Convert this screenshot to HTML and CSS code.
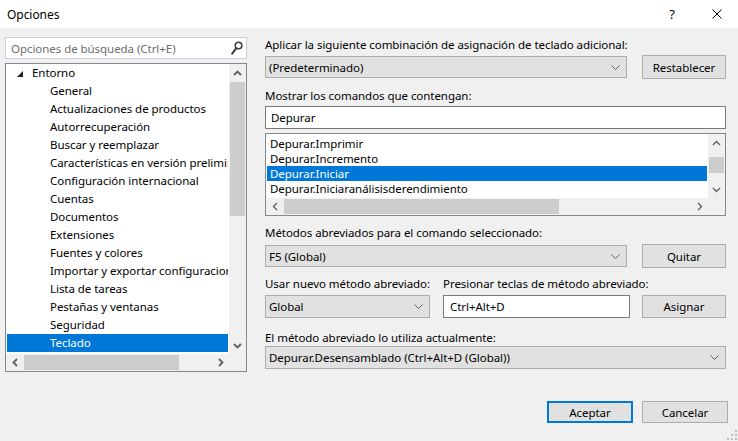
FILE: index.html
```html
<!DOCTYPE html>
<html lang="es">
<head>
<meta charset="utf-8">
<title>Opciones</title>
<link rel="stylesheet" href="styles.css">
</head>
<body>
<div class="titlebar">
  <span class="title">Opciones</span>
  <span class="tb-help">?</span>
  <span class="tb-close"><svg width="10" height="10" viewBox="0 0 10 10"><path d="M0.5 0.5L9.5 9.5M9.5 0.5L0.5 9.5" stroke="#000" stroke-width="1" fill="none"/></svg></span>
</div>
<div class="main">
  <div class="left">
    <div class="search">
      <span class="placeholder">Opciones de búsqueda (Ctrl+E)</span>
      <svg class="magnifier" width="12" height="14" viewBox="0 0 12 14"><circle cx="7.5" cy="4.5" r="3.3" fill="none" stroke="#3c3c3c" stroke-width="1.6"/><path d="M5.3 7L1.2 12.6" stroke="#3c3c3c" stroke-width="2" stroke-linecap="round"/></svg>
    </div>
    <div class="tree">
      <div class="tree-rows">
        <div class="trow parent"><svg class="tri" width="6" height="6" viewBox="0 0 6 6"><path d="M6 0V6H0Z" fill="#1e1e1e"/></svg>Entorno</div>
        <div class="trow child">General</div>
        <div class="trow child">Actualizaciones de productos</div>
        <div class="trow child">Autorrecuperación</div>
        <div class="trow child">Buscar y reemplazar</div>
        <div class="trow child">Características en versión preliminar</div>
        <div class="trow child">Configuración internacional</div>
        <div class="trow child">Cuentas</div>
        <div class="trow child">Documentos</div>
        <div class="trow child">Extensiones</div>
        <div class="trow child">Fuentes y colores</div>
        <div class="trow child">Importar y exportar configuraciones</div>
        <div class="trow child">Lista de tareas</div>
        <div class="trow child">Pestañas y ventanas</div>
        <div class="trow child">Seguridad</div>
        <div class="trow child selected">Teclado</div>
      </div>
      <div class="vscroll">
        <div class="sbtn"><svg width="9" height="6" viewBox="0 0 9 6"><path d="M1 5L4.5 1.5L8 5" fill="none" stroke="#606060" stroke-width="1.8"/></svg></div>
        <div class="vtrack"><div class="vthumb tree-vthumb"></div></div>
        <div class="sbtn"><svg width="9" height="6" viewBox="0 0 9 6"><path d="M1 1L4.5 4.5L8 1" fill="none" stroke="#606060" stroke-width="1.8"/></svg></div>
      </div>
      <div class="hscroll">
        <div class="sbtn"><svg width="6" height="9" viewBox="0 0 6 9"><path d="M5 1L1.5 4.5L5 8" fill="none" stroke="#606060" stroke-width="1.8"/></svg></div>
        <div class="htrack"><div class="hthumb tree-hthumb"></div></div>
        <div class="sbtn"><svg width="6" height="9" viewBox="0 0 6 9"><path d="M1 1L4.5 4.5L1 8" fill="none" stroke="#606060" stroke-width="1.8"/></svg></div>
      </div>
      <div class="corner"></div>
    </div>
  </div>

  <div class="right">
    <div class="label l1">Aplicar la siguiente combinación de asignación de teclado adicional:</div>
    <div class="line r1">
      <div class="combo c-main"><span class="ctext">(Predeterminado)</span><svg width="9" height="5" viewBox="0 0 9 5"><path d="M0.5 0.5L4.5 4.5L8.5 0.5" fill="none" stroke="#606060" stroke-width="1"/></svg></div>
      <div class="btn">Restablecer</div>
    </div>
    <div class="label l2">Mostrar los comandos que contengan:</div>
    <div class="textbox tb-full">Depurar</div>
    <div class="listbox">
      <div class="lb-rows">
        <div class="lrow">Depurar.Imprimir</div>
        <div class="lrow">Depurar.Incremento</div>
        <div class="lrow selected">Depurar.Iniciar</div>
        <div class="lrow">Depurar.Iniciaranálisisderendimiento</div>
      </div>
      <div class="vscroll">
        <div class="sbtn"><svg width="9" height="6" viewBox="0 0 9 6"><path d="M1 5L4.5 1.5L8 5" fill="none" stroke="#606060" stroke-width="1.4"/></svg></div>
        <div class="vtrack"><div class="vthumb lb-vthumb"></div></div>
        <div class="sbtn"><svg width="9" height="6" viewBox="0 0 9 6"><path d="M1 1L4.5 4.5L8 1" fill="none" stroke="#606060" stroke-width="1.4"/></svg></div>
      </div>
      <div class="hscroll">
        <div class="sbtn"><svg width="6" height="9" viewBox="0 0 6 9"><path d="M5 1L1.5 4.5L5 8" fill="none" stroke="#606060" stroke-width="1.4"/></svg></div>
        <div class="htrack"><div class="hthumb lb-hthumb"></div></div>
        <div class="sbtn"><svg width="6" height="9" viewBox="0 0 6 9"><path d="M1 1L4.5 4.5L1 8" fill="none" stroke="#606060" stroke-width="1.4"/></svg></div>
      </div>
      <div class="corner"></div>
    </div>
    <div class="label l3">Métodos abreviados para el comando seleccionado:</div>
    <div class="line r3">
      <div class="combo c-main"><span class="ctext">F5 (Global)</span><svg width="9" height="5" viewBox="0 0 9 5"><path d="M0.5 0.5L4.5 4.5L8.5 0.5" fill="none" stroke="#606060" stroke-width="1"/></svg></div>
      <div class="btn">Quitar</div>
    </div>
    <div class="split-labels">
      <span class="label sl-a">Usar nuevo método abreviado:</span>
      <span class="label sl-b">Presionar teclas de método abreviado:</span>
    </div>
    <div class="line r4">
      <div class="combo c-scope"><span class="ctext">Global</span><svg width="9" height="5" viewBox="0 0 9 5"><path d="M0.5 0.5L4.5 4.5L8.5 0.5" fill="none" stroke="#606060" stroke-width="1"/></svg></div>
      <div class="textbox tb-keys">Ctrl+Alt+D</div>
      <div class="btn">Asignar</div>
    </div>
    <div class="label l5">El método abreviado lo utiliza actualmente:</div>
    <div class="combo c-full"><span class="ctext">Depurar.Desensamblado (Ctrl+Alt+D (Global))</span><svg width="9" height="5" viewBox="0 0 9 5"><path d="M0.5 0.5L4.5 4.5L8.5 0.5" fill="none" stroke="#606060" stroke-width="1"/></svg></div>
  </div>
</div>
<div class="footer">
  <div class="btn fbtn default">Aceptar</div>
  <div class="btn fbtn">Cancelar</div>
</div>
<svg class="grip" width="10" height="10" viewBox="0 0 10 10">
  <rect x="8" y="0" width="2" height="2" fill="#bcbcbc"/>
  <rect x="4" y="4" width="2" height="2" fill="#bcbcbc"/>
  <rect x="8" y="4" width="2" height="2" fill="#bcbcbc"/>
  <rect x="0" y="8" width="2" height="2" fill="#bcbcbc"/>
  <rect x="4" y="8" width="2" height="2" fill="#bcbcbc"/>
  <rect x="8" y="8" width="2" height="2" fill="#bcbcbc"/>
</svg>
</body>
</html>
```
FILE: styles.css
```css
* { box-sizing: border-box; }
html, body { margin: 0; padding: 0; }
body {
  width: 738px;
  height: 441px;
  background: #f0f0f0;
  font-family: "Noto Sans", "Liberation Sans", sans-serif;
  font-size: 11.5px;
  letter-spacing: -0.05px;
  color: #000;
  overflow: hidden;
  position: relative;
}

/* title bar */
.titlebar {
  height: 28px;
  background: #fff;
  display: flex;
  align-items: center;
  padding-left: 7px;
}
.title { flex: 1; font-size: 12px; }
.tb-help {
  width: 30px;
  margin-right: 15px;
  text-align: center;
  font-size: 13px;
}
.tb-close {
  width: 30px;
  margin-right: 6px;
  display: flex;
  justify-content: center;
  align-items: center;
}

/* main area */
.main {
  display: flex;
  padding: 9px 0 0 5px;
}
.left { width: 242px; }

.search {
  height: 22px;
  border: 1px solid #cccedb;
  background: #fff;
  display: flex;
  align-items: center;
  padding: 0 3px 0 5px;
}
.placeholder { flex: 1; color: #6d6d6d; white-space: nowrap; overflow: hidden; }
.magnifier { display: block; }

.tree {
  margin-top: 4px;
  height: 309px;
  border: 1px solid #828790;
  background: #fff;
  display: grid;
  grid-template-columns: 1fr 17px;
  grid-template-rows: 1fr 17px;
}
.tree-rows { overflow: hidden; padding: 0 1px; }
.trow {
  height: 18px;
  line-height: 18px;
  white-space: nowrap;
  overflow: hidden;
}
.trow.parent { padding-left: 10px; display: flex; align-items: center; }
.trow.parent .tri { margin-right: 9px; margin-top: 1px; flex: none; }
.trow.child { padding-left: 43px; }
.trow.selected { background: #0078d7; color: #fff; }

/* scrollbars */
.vscroll {
  background: #f0f0f0;
  display: flex;
  flex-direction: column;
}
.hscroll {
  background: #f0f0f0;
  display: flex;
}
.corner { background: #f0f0f0; }
.sbtn {
  width: 17px;
  height: 17px;
  flex: none;
  display: flex;
  align-items: center;
  justify-content: center;
}
.vtrack { flex: 1; padding: 0 1px; }
.htrack { flex: 1; padding: 1px 0; }
.vthumb { background: #cdcdcd; }
.hthumb { background: #cdcdcd; height: 15px; }
.tree-vthumb { margin-top: 1px; height: 134px; }
.tree-hthumb { margin-left: 1px; width: 155px; }
.lb-vthumb { margin-top: 6px; height: 16px; }
.lb-hthumb { margin-left: 1px; width: 275px; }

/* right side */
.right {
  margin-left: 18px;
  width: 461px;
}
.label { display: block; line-height: 16px; height: 16px; white-space: nowrap; }
.line { display: flex; align-items: center; height: 24px; }
.l1 { margin-top: 0; }
.r1 { margin-top: 2px; }
.l2 { margin-top: 9px; }
.l3 { margin-top: 9px; }
.r3 { margin-top: 3px; }
.split-labels { margin-top: 8px; display: flex; }
.sl-a { width: 178px; }
.r4 { margin-top: 2px; }
.l5 { margin-top: 12px; }

.combo {
  height: 22px;
  border: 1px solid #adadad;
  background: #e1e1e1;
  display: flex;
  align-items: center;
  padding: 0 6px 0 3px;
}
.ctext { flex: 1; white-space: nowrap; }
.c-main { width: 362px; }
.c-scope { width: 165px; height: 23px; }
.c-full { width: 461px; height: 23px; }

.btn {
  width: 84px;
  height: 24px;
  margin-left: auto;
  border: 1px solid #adadad;
  background: #e1e1e1;
  display: flex;
  align-items: center;
  justify-content: center;
}
.r4 .btn { height: 23px; }

.textbox {
  height: 23px;
  border: 1px solid #7a7a7a;
  background: #fff;
  display: flex;
  align-items: center;
  padding-left: 5px;
  white-space: nowrap;
}
.tb-full { margin-top: 2px; width: 461px; }
.tb-keys { width: 187px; margin-left: 13px; padding-left: 6px; }

.listbox {
  margin-top: 4px;
  height: 83px;
  border: 1px solid #828790;
  background: #fff;
  display: grid;
  grid-template-columns: 1fr 17px;
  grid-template-rows: 1fr 17px;
}
.lb-rows { overflow: hidden; padding: 2px 1px 0 1px; }
.lrow {
  height: 15px;
  line-height: 15px;
  padding-left: 3px;
  white-space: nowrap;
}
.lrow.selected { background: #0078d7; color: #fff; }

/* footer */
.footer {
  margin-top: 29px;
  display: flex;
  justify-content: flex-end;
  gap: 9px;
  padding-right: 10px;
}
.fbtn { width: 86px; height: 22px; margin-left: 0; }
.fbtn.default { border: 2px solid #0078d7; }

.grip { position: absolute; right: 1px; bottom: 1px; }
```
